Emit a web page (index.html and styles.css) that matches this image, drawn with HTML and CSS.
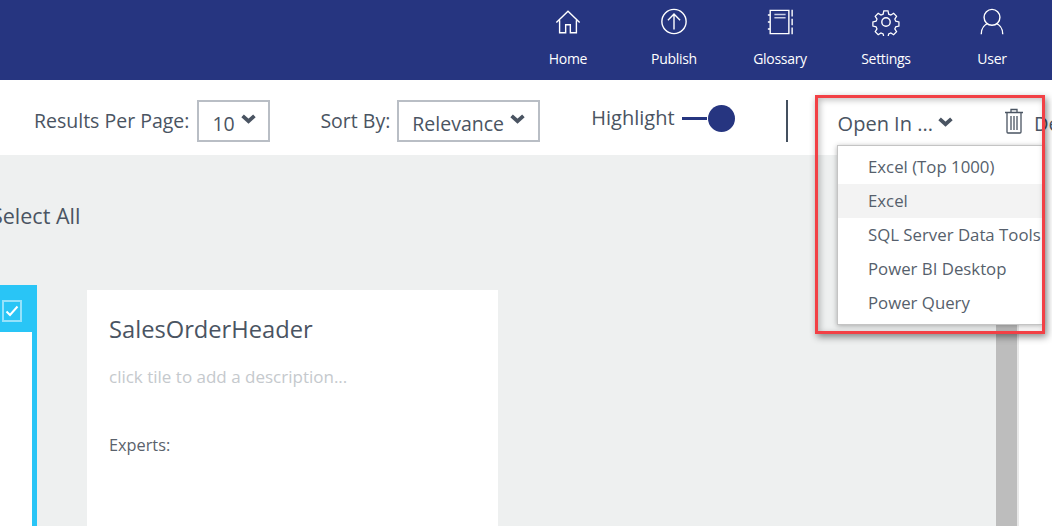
FILE: index.html
```html
<!DOCTYPE html>
<html lang="en">
<head>
<meta charset="utf-8">
<title>Search results</title>
<link rel="stylesheet" href="styles.css">
</head>
<body>
<div class="page">
  <header class="topbar">
    <a class="nav-item">
      <svg class="nav-icon" viewBox="0 0 30 30"><path d="M2.500 15.500 15 3.500l12.500 12M6 13v13.500h6.500V18h5v8.500H24V13"/></svg>
      <span>Home</span>
    </a>
    <a class="nav-item">
      <svg class="nav-icon" viewBox="0 0 30 30"><circle cx="15" cy="14.500" r="13"/><path d="M15 23V7M8.500 13 15 6.500l6.500 6.500"/></svg>
      <span>Publish</span>
    </a>
    <a class="nav-item">
      <svg class="nav-icon" viewBox="0 0 30 30"><path d="M4.500 2.500h20v25h-20zM4.500 7.500H2M4.500 15H2M4.500 22.500H2M28 2v7M28 11.500v7M28 21v7"/><path class="nav-icon-fill" d="M9 7h12M9 10.500h12"/></svg>
      <span>Glossary</span>
    </a>
    <a class="nav-item">
      <svg class="nav-icon" viewBox="0 0 30 30"><circle cx="15" cy="15" r="4.500"/><path d="M12.500 2h5l.8 3.800 2.600 1.100 3.300-2.100 3.500 3.500-2.100 3.300 1.100 2.600 3.800.8v5l-3.800.8-1.100 2.600 2.100 3.300-3.500 3.500-3.300-2.100-2.600 1.100-.8 3.800h-5l-.8-3.800-2.600-1.100-3.300 2.100-3.500-3.500 2.100-3.300-1.100-2.600-3.800-.8v-5l3.800-.8 1.100-2.600-2.100-3.300 3.500-3.500 3.300 2.100 2.600-1.100z" transform="translate(1.400 1.400) scale(.9)"/></svg>
      <span>Settings</span>
    </a>
    <a class="nav-item">
      <svg class="nav-icon" viewBox="0 0 30 30"><circle cx="15" cy="10" r="8.500"/><path d="M3.500 28c0-7 4.500-10.500 7-11.500M26.500 28c0-7-4.500-10.500-7-11.500"/></svg>
      <span>User</span>
    </a>
  </header>

  <section class="toolbar">
    <label class="field-label">Results Per Page:</label>
    <div class="select select-count"><span class="select-text">10</span><svg class="chevron" viewBox="0 0 14 9"><path d="M1.500 1.500 7 6.500l5.500-5"/></svg></div>
    <label class="field-label sort-label">Sort By:</label>
    <div class="select select-sort"><span class="select-text">Relevance</span><svg class="chevron" viewBox="0 0 14 9"><path d="M1.500 1.500 7 6.500l5.500-5"/></svg></div>
    <div class="highlight">
      <span class="highlight-text">Highlight</span>
      <span class="toggle-line"></span>
      <span class="toggle-knob"></span>
    </div>
    <span class="divider"></span>
    <div class="open-in"><span>Open In ...</span><svg class="chevron" viewBox="0 0 14 9"><path d="M1.500 1.500 7 6.500l5.500-5"/></svg></div>
    <svg class="trash" viewBox="0 0 20 26"><path d="M1 4.500h18M7 4.500V1.500h6v3M3 4.500v19.500a1 1 0 0 0 1 1h12a1 1 0 0 0 1-1V4.500M7 8v14M10 8v14M13 8v14"/></svg>
    <span class="delete">Delete</span>
  </section>

  <main class="body-row">
    <div class="content">
      <div class="select-all">Select All</div>
      <div class="cards">
        <div class="card-selected">
          <div class="card-selected-head">
            <span class="check"><svg viewBox="0 0 14 12"><path d="M1.500 6.500 5 10l7.500-8.500"/></svg></span>
          </div>
          <div class="card-selected-body"></div>
        </div>
        <article class="card">
          <h2 class="card-title">SalesOrderHeader</h2>
          <p class="card-desc">click tile to add a description...</p>
          <p class="card-experts">Experts:</p>
        </article>
      </div>
    </div>
    <div class="scrollbar"></div>
    <div class="side"></div>
  </main>

  <ul class="menu">
    <li>Excel (Top 1000)</li>
    <li class="menu-active">Excel</li>
    <li>SQL Server Data Tools</li>
    <li>Power BI Desktop</li>
    <li>Power Query</li>
  </ul>
  <div class="annotation"></div>
</div>
</body>
</html>
```
FILE: styles.css
```css
* { box-sizing: border-box; }
html, body { margin: 0; padding: 0; }
body { font-family: "Open Sans", "Noto Sans", sans-serif; color: #4a5462; background: #fff; }
.page { position: relative; width: 1052px; height: 526px; overflow: hidden; display: flex; flex-direction: column; }

.topbar { flex: none; height: 80px; background: #263580; display: flex; justify-content: flex-end; padding-right: 7px; }
.nav-item { width: 106px; display: flex; flex-direction: column; align-items: center; color: #fff; font-size: 14px; letter-spacing: -.3px; padding-top: 8px; }
.nav-item span { margin-top: 13px; line-height: 20px; }
.nav-icon { width: 28px; height: 28px; fill: none; stroke: #fff; stroke-width: 1.500; }
.nav-icon-fill { stroke: #c8cde4; }

.toolbar { flex: none; height: 75px; display: flex; align-items: flex-start; padding-left: 34px; font-size: 19.500px; white-space: nowrap; overflow: hidden; }
.field-label { margin-top: 28px; line-height: 26px; }
.select { height: 42px; margin-top: 20px; margin-left: 8px; border: 2px solid #b9bec5; display: flex; align-items: center; padding-left: 13px; gap: 6px; flex: none; }
.select-text { padding-top: 4px; }
.select-count { width: 73px; }
.select-sort { width: 143px; margin-left: 7px; }
.sort-label { margin-left: 50px; }
.chevron { width: 15px; height: 10px; fill: none; stroke: #4a5462; stroke-width: 3.500; margin-top: -4px; flex: none; }
.highlight { display: flex; align-items: center; height: 28px; margin-left: 51px; margin-top: 24px; }
.highlight-text { font-size: 20px; margin-top: -2px; }
.toggle-line { width: 25px; height: 3px; background: #263580; margin-left: 7px; }
.toggle-knob { width: 27px; height: 27px; border-radius: 50%; background: #263580; margin-left: 1px; }
.divider { width: 2px; height: 42px; background: #44505f; margin-left: 51px; margin-top: 20px; flex: none; }
.open-in { display: flex; align-items: center; gap: 5px; margin-left: 50px; margin-top: 31px; line-height: 26px; font-size: 20px; }
.open-in .chevron { margin-top: -5px; }
.trash { width: 20px; height: 26px; flex: none; fill: none; stroke: #4a5462; stroke-width: 1.300; margin-left: 51px; margin-top: 28px; }
.delete { margin-left: 10px; margin-top: 31px; line-height: 26px; font-size: 20px; }

.body-row { flex: 1; display: flex; min-height: 0; }
.content { width: 996px; background: #eef0f0; display: flex; flex-direction: column; flex: none; overflow: hidden; }
.select-all { font-size: 21.500px; line-height: 28px; margin: 47px 0 0 -9px; white-space: nowrap; }
.cards { display: flex; align-items: flex-start; margin-top: 55px; flex: 1; }
.card-selected { width: 37px; height: 300px; background: #29c5f6; padding-right: 5px; display: flex; flex-direction: column; flex: none; }
.card-selected-head { height: 47px; padding: 15px 0 0 2px; flex: none; }
.check { width: 20px; height: 22px; border: 2px solid rgba(255, 255, 255, .5); display: flex; align-items: center; justify-content: center; }
.check svg { width: 14px; height: 12px; fill: none; stroke: #fff; stroke-width: 2; }
.card-selected-body { flex: 1; background: #fff; }
.card { width: 411px; height: 300px; background: #fff; margin: 5px 0 0 50px; padding: 23px 22px; flex: none; }
.card-title { margin: 0; font-size: 23.700px; font-weight: 400; line-height: 32px; }
.card-desc { margin: 20px 0 0; font-size: 17px; line-height: 24px; color: #c5c9cd; }
.card-experts { margin: 44px 0 0; font-size: 16.300px; line-height: 24px; color: #5a626c; }
.scrollbar { width: 21px; background: #bdbdbd; flex: none; }
.side { flex: 1; background: #fff; border-left: 2px solid #e8e8e8; }

.menu { position: absolute; left: 837px; top: 145px; width: 206px; height: 180px; margin: 0; padding: 4px 0 6px; list-style: none; background: #fff; border: 1px solid #c4c4c4; box-shadow: 0 1px 5px rgba(0, 0, 0, .3); font-size: 16.800px; white-space: nowrap; overflow: hidden; color: #565f6c; }
.menu li { height: 34px; line-height: 33px; padding-left: 30px; }
.menu-active { background: #f3f3f3; }
.annotation { position: absolute; left: 815px; top: 95px; width: 230px; height: 239px; border: 3px solid #f24045; box-shadow: 2px 3px 7px rgba(0, 0, 0, .45), inset 2px 2px 6px rgba(0, 0, 0, .25); }
```
